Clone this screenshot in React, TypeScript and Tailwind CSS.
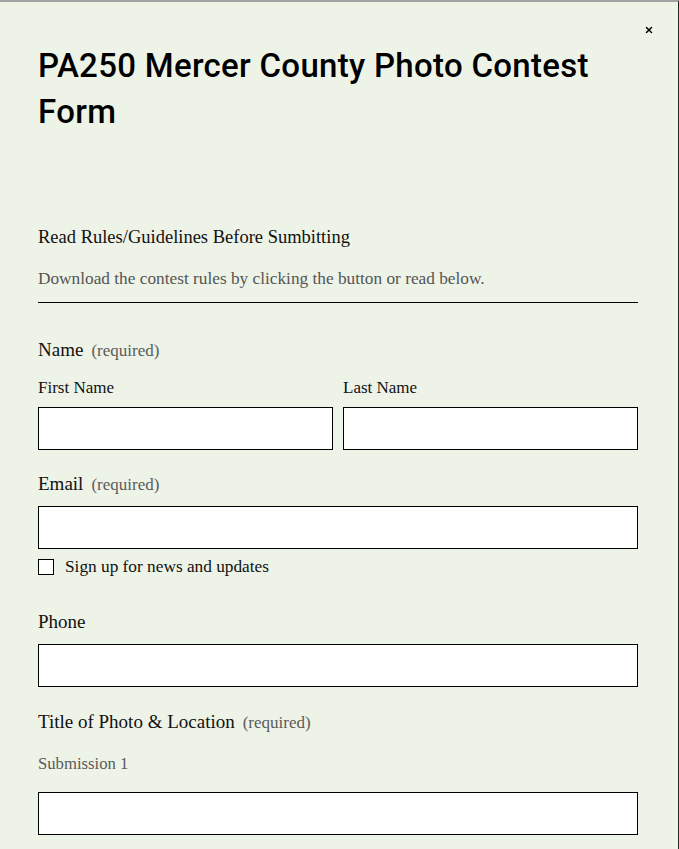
import { X } from 'lucide-react';

const serif = { fontFamily: '"Liberation Serif", serif' };

const Field = ({ className = '' }: { className?: string }) => (
  <input type="text" className={`block w-full h-[43px] bg-white border border-black outline-none ${className}`} />
);

const Label = ({ text, required }: { text: string; required?: boolean }) => (
  <div className="flex items-baseline gap-[8px] text-[19px] leading-[24px] text-[#111]">
    <span>{text}</span>
    {required && <span className="text-[17px] text-[#5a5a5a]">(required)</span>}
  </div>
);

export default function App() {
  return (
    <div className="relative min-h-screen h-[849px] overflow-hidden bg-[#eef3e8] border-t-2 border-[#a2a2a2] border-r border-r-[#1c2a22]">
      {/* Cerrar */}
      <button className="absolute top-[23px] right-[24px] text-black">
        <X className="w-[10px] h-[10px]" strokeWidth={3.4} />
      </button>

      <div className="px-[38px] w-[676px]" style={serif}>
        {/* Titulo */}
        <h1
          className="pt-[41px] text-[33px] leading-[46px] text-black font-medium tracking-[0.3px]"
          style={{ fontFamily: 'Roboto, "Liberation Sans", Arial, sans-serif' }}
        >
          PA250 Mercer County Photo Contest Form
        </h1>

        {/* Reglas */}
        <div className="mt-[90px] text-[18.5px] leading-[24px] text-[#111]">Read Rules/Guidelines Before Sumbitting</div>
        <div className="mt-[18px] text-[17.3px] leading-[24px] text-[#555] pb-[11px] border-b border-black">
          Download the contest rules by clicking the button or read below.
        </div>

        {/* Nombre */}
        <div className="mt-[35px]">
          <Label text="Name" required />
        </div>
        <div className="mt-[13px] grid grid-cols-2 gap-[10px]">
          <div>
            <div className="text-[17px] leading-[24px] text-[#111] mb-[7px]">First Name</div>
            <Field />
          </div>
          <div>
            <div className="text-[17px] leading-[24px] text-[#111] mb-[7px]">Last Name</div>
            <Field />
          </div>
        </div>

        {/* Email */}
        <div className="mt-[22px]">
          <Label text="Email" required />
        </div>
        <Field className="mt-[9px]" />
        <label className="mt-[6px] flex items-center gap-[11px] text-[17.3px] leading-[24px] text-[#111]">
          <span className="w-[16px] h-[16px] bg-white border border-black" />
          Sign up for news and updates
        </label>

        {/* Telefono */}
        <div className="mt-[31px]">
          <Label text="Phone" />
        </div>
        <Field className="mt-[10px]" />

        {/* Titulo de la foto */}
        <div className="mt-[23px]">
          <Label text="Title of Photo & Location" required />
        </div>
        <div className="mt-[17px] text-[16.7px] leading-[24px] text-[#5a5a5a]">Submission 1</div>
        <Field className="mt-[16px]" />
      </div>
    </div>
  );
}
